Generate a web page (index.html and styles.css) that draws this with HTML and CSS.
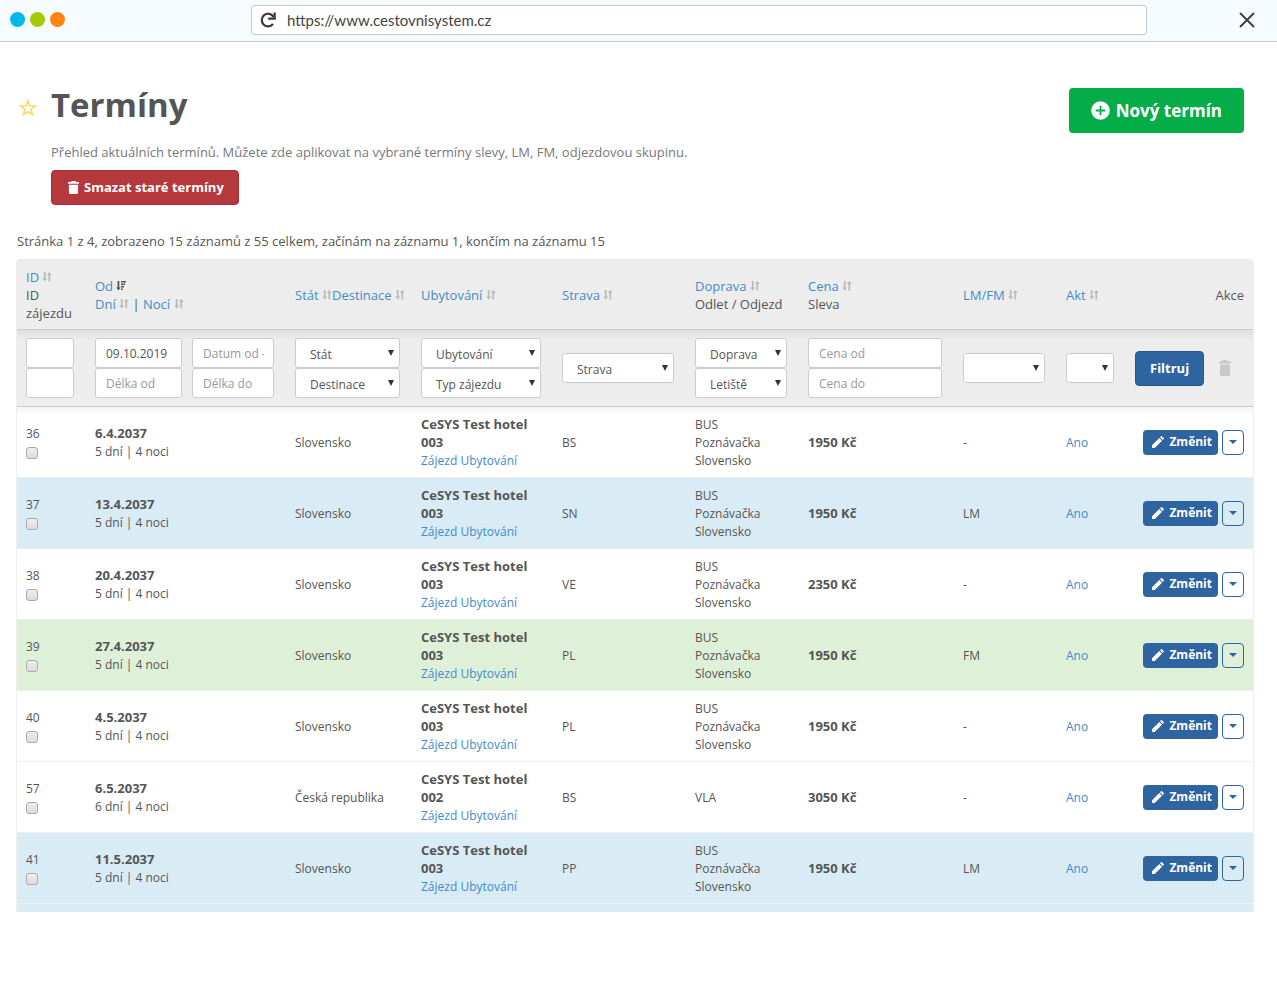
FILE: index.html
```html
<!DOCTYPE html>
<html lang="cs">
<head>
<meta charset="utf-8">
<meta name="viewport" content="width=device-width, initial-scale=1">
<title>Termíny</title>
<link rel="stylesheet" href="styles.css">
</head>
<body>
<svg class="sprite" aria-hidden="true">
  <symbol id="sort" viewBox="0 0 10 10"><path d="M1.800 0h1.800v6.500H5.200L2.700 9.500.2 6.500h1.600zM6.400 9.500h1.800V3h1.600L7.300 0 4.800 3h1.600z"/></symbol>
  <symbol id="sorted" viewBox="0 0 10 10"><path d="M1.500 0h1.800v6.500H4.600L2.400 9.500.2 6.500h1.300zM5 0h5v1.600H5zM5 2.500h4v1.500H5zM5 5h3v1.500H5zM5 7.500h1.800V9H5z"/></symbol>
  <symbol id="trash" viewBox="0 0 12 14"><path d="M4 0h4l.8 1H12v2H0V1h3.200zM1 4h10v8.500q0 1.500-1.500 1.500h-7Q1 14 1 12.500z"/></symbol>
  <symbol id="pencil" viewBox="0 0 12 12"><path d="M0 12v-2.700L7.300 2 10 4.700 2.700 12zM8 1.300 9 .3q.5-.5 1 0L11.700 2q.5.500 0 1l-1 1z"/></symbol>
  <symbol id="caret" viewBox="0 0 8 4"><path d="M0 0h8L4 4z"/></symbol>
</svg>

<div class="browser">
  <div class="dots"><span class="dot dot-blue"></span><span class="dot dot-green"></span><span class="dot dot-orange"></span></div>
  <div class="address">
    <button class="plain" type="button" aria-label="Obnovit"><svg width="16" height="16" viewBox="0 0 16 16"><path d="M13 12A6.300 6.300 0 1 1 13.600 5" fill="none" stroke="#3a3a3a" stroke-width="2.200"/><path d="M14.700.6V6.600H8.200" fill="none" stroke="#3a3a3a" stroke-width="2.200"/></svg></button>
    <input class="url" type="text" aria-label="Adresa" value="https://www.cestovnisystem.cz">
  </div>
  <button class="plain close" type="button" aria-label="Zavřít"><svg width="16" height="16" viewBox="0 0 16 16"><path d="M1.500 1.500l13 13M14.500 1.500l-13 13" stroke="#3a3a3a" stroke-width="1.800" stroke-linecap="round"/></svg></button>
</div>

<main class="page">
  <header class="head">
    <button class="plain star" type="button" aria-label="Oblíbené"><svg width="18" height="18" viewBox="0 0 18 18"><path d="M9 1.600l1.900 5.200 5.500.2-4.300 3.400 1.500 5.300L9 12.700l-4.600 3 1.500-5.300L1.600 7l5.500-.2z" fill="none" stroke="#fbd85e" stroke-width="1.500"/></svg></button>
    <div class="intro">
      <h1>Termíny</h1>
      <p class="lead">Přehled aktuálních termínů. Můžete zde aplikovat na vybrané termíny slevy, LM, FM, odjezdovou skupinu.</p>
      <button class="btn btn-danger" type="button"><svg width="11" height="13"><use href="#trash"/></svg>Smazat staré termíny</button>
    </div>
    <button class="btn btn-new" type="button"><svg width="19" height="19" viewBox="0 0 19 19"><circle cx="9.500" cy="9.500" r="9.300" fill="#fff"/><path d="M9.500 4.700v9.600M4.700 9.500h9.600" stroke="#05ad48" stroke-width="1.800"/></svg>Nový termín</button>
  </header>

  <p class="summary">Stránka 1 z 4, zobrazeno 15 záznamů z 55 celkem, začínám na záznamu 1, končím na záznamu 15</p>

  <table class="grid">
    <colgroup><col class="c-id"><col class="c-date"><col class="c-state"><col class="c-hotel"><col class="c-board"><col class="c-transport"><col class="c-price"><col class="c-lm"><col class="c-act"><col class="c-tools"></colgroup>
    <thead>
      <tr class="titles">
        <th><a href="#">ID</a> <svg class="sort"><use href="#sort"/></svg><br>ID zájezdu</th>
        <th><a href="#">Od</a> <svg class="sort on"><use href="#sorted"/></svg><br><a href="#">Dní</a> <svg class="sort"><use href="#sort"/></svg> | <a href="#">Nocí</a> <svg class="sort"><use href="#sort"/></svg></th>
        <th class="tight"><a href="#">Stát</a> <svg class="sort"><use href="#sort"/></svg><a href="#">Destinace</a> <svg class="sort"><use href="#sort"/></svg></th>
        <th><a href="#">Ubytování</a> <svg class="sort"><use href="#sort"/></svg></th>
        <th><a href="#">Strava</a> <svg class="sort"><use href="#sort"/></svg></th>
        <th class="tight"><a href="#">Doprava</a> <svg class="sort"><use href="#sort"/></svg><br>Odlet / Odjezd</th>
        <th><a href="#">Cena</a> <svg class="sort"><use href="#sort"/></svg><br>Sleva</th>
        <th><a href="#">LM/FM</a> <svg class="sort"><use href="#sort"/></svg></th>
        <th><a href="#">Akt</a> <svg class="sort"><use href="#sort"/></svg></th>
        <th class="right">Akce</th>
      </tr>
      <tr class="filters">
        <td><div class="stack"><input class="field" type="text" aria-label="ID"><input class="field" type="text" aria-label="ID zájezdu"></div></td>
        <td><div class="pairs"><input class="field" type="text" aria-label="Datum od" value="09.10.2019"><input class="field" type="text" aria-label="Datum od - do" placeholder="Datum od - do"><input class="field" type="text" aria-label="Délka od" placeholder="Délka od"><input class="field" type="text" aria-label="Délka do" placeholder="Délka do"></div></td>
        <td><div class="stack"><span class="pick"><select class="field" aria-label="Stát"><option>Stát</option></select></span><span class="pick"><select class="field" aria-label="Destinace"><option>Destinace</option></select></span></div></td>
        <td><div class="stack"><span class="pick"><select class="field" aria-label="Ubytování"><option>Ubytování</option></select></span><span class="pick"><select class="field" aria-label="Typ zájezdu"><option>Typ zájezdu</option></select></span></div></td>
        <td><div class="stack"><span class="pick"><select class="field" aria-label="Strava"><option>Strava</option></select></span></div></td>
        <td><div class="stack"><span class="pick"><select class="field" aria-label="Doprava"><option>Doprava</option></select></span><span class="pick"><select class="field" aria-label="Letiště"><option>Letiště</option></select></span></div></td>
        <td><div class="stack"><input class="field" type="text" aria-label="Cena od" placeholder="Cena od"><input class="field" type="text" aria-label="Cena do" placeholder="Cena do"></div></td>
        <td><div class="stack"><span class="pick"><select class="field" aria-label="LM/FM"><option></option></select></span></div></td>
        <td><div class="stack"><span class="pick"><select class="field" aria-label="Akt"><option></option></select></span></div></td>
        <td><div class="apply"><button class="btn btn-filter" type="button">Filtruj</button><button class="plain clear" type="button" aria-label="Zrušit filtr"><svg width="12" height="16" viewBox="0 0 12 14" preserveAspectRatio="none"><use href="#trash"/></svg></button></div></td>
      </tr>
    </thead>
    <tbody>
      <tr>
        <td><label class="pickrow">36<input type="checkbox"></label></td>
        <td><strong>6.4.2037</strong><br>5 dní | 4 noci</td>
        <td>Slovensko</td>
        <td><strong>CeSYS Test hotel 003</strong><br><a href="#">Zájezd</a> <a href="#">Ubytování</a></td>
        <td>BS</td>
        <td>BUS<br>Poznávačka<br>Slovensko</td>
        <td><strong>1950 Kč</strong></td>
        <td>-</td>
        <td><a href="#">Ano</a></td>
        <td><div class="tools"><button class="btn btn-edit" type="button"><svg width="12" height="12"><use href="#pencil"/></svg>Změnit</button><button class="more" type="button" aria-label="Další akce"><svg width="8" height="4"><use href="#caret"/></svg></button></div></td>
      </tr>
      <tr class="lm">
        <td><label class="pickrow">37<input type="checkbox"></label></td>
        <td><strong>13.4.2037</strong><br>5 dní | 4 noci</td>
        <td>Slovensko</td>
        <td><strong>CeSYS Test hotel 003</strong><br><a href="#">Zájezd</a> <a href="#">Ubytování</a></td>
        <td>SN</td>
        <td>BUS<br>Poznávačka<br>Slovensko</td>
        <td><strong>1950 Kč</strong></td>
        <td>LM</td>
        <td><a href="#">Ano</a></td>
        <td><div class="tools"><button class="btn btn-edit" type="button"><svg width="12" height="12"><use href="#pencil"/></svg>Změnit</button><button class="more" type="button" aria-label="Další akce"><svg width="8" height="4"><use href="#caret"/></svg></button></div></td>
      </tr>
      <tr>
        <td><label class="pickrow">38<input type="checkbox"></label></td>
        <td><strong>20.4.2037</strong><br>5 dní | 4 noci</td>
        <td>Slovensko</td>
        <td><strong>CeSYS Test hotel 003</strong><br><a href="#">Zájezd</a> <a href="#">Ubytování</a></td>
        <td>VE</td>
        <td>BUS<br>Poznávačka<br>Slovensko</td>
        <td><strong>2350 Kč</strong></td>
        <td>-</td>
        <td><a href="#">Ano</a></td>
        <td><div class="tools"><button class="btn btn-edit" type="button"><svg width="12" height="12"><use href="#pencil"/></svg>Změnit</button><button class="more" type="button" aria-label="Další akce"><svg width="8" height="4"><use href="#caret"/></svg></button></div></td>
      </tr>
      <tr class="fm">
        <td><label class="pickrow">39<input type="checkbox"></label></td>
        <td><strong>27.4.2037</strong><br>5 dní | 4 noci</td>
        <td>Slovensko</td>
        <td><strong>CeSYS Test hotel 003</strong><br><a href="#">Zájezd</a> <a href="#">Ubytování</a></td>
        <td>PL</td>
        <td>BUS<br>Poznávačka<br>Slovensko</td>
        <td><strong>1950 Kč</strong></td>
        <td>FM</td>
        <td><a href="#">Ano</a></td>
        <td><div class="tools"><button class="btn btn-edit" type="button"><svg width="12" height="12"><use href="#pencil"/></svg>Změnit</button><button class="more" type="button" aria-label="Další akce"><svg width="8" height="4"><use href="#caret"/></svg></button></div></td>
      </tr>
      <tr>
        <td><label class="pickrow">40<input type="checkbox"></label></td>
        <td><strong>4.5.2037</strong><br>5 dní | 4 noci</td>
        <td>Slovensko</td>
        <td><strong>CeSYS Test hotel 003</strong><br><a href="#">Zájezd</a> <a href="#">Ubytování</a></td>
        <td>PL</td>
        <td>BUS<br>Poznávačka<br>Slovensko</td>
        <td><strong>1950 Kč</strong></td>
        <td>-</td>
        <td><a href="#">Ano</a></td>
        <td><div class="tools"><button class="btn btn-edit" type="button"><svg width="12" height="12"><use href="#pencil"/></svg>Změnit</button><button class="more" type="button" aria-label="Další akce"><svg width="8" height="4"><use href="#caret"/></svg></button></div></td>
      </tr>
      <tr>
        <td><label class="pickrow">57<input type="checkbox"></label></td>
        <td><strong>6.5.2037</strong><br>6 dní | 4 noci</td>
        <td>Česká republika</td>
        <td><strong>CeSYS Test hotel 002</strong><br><a href="#">Zájezd</a> <a href="#">Ubytování</a></td>
        <td>BS</td>
        <td>VLA</td>
        <td><strong>3050 Kč</strong></td>
        <td>-</td>
        <td><a href="#">Ano</a></td>
        <td><div class="tools"><button class="btn btn-edit" type="button"><svg width="12" height="12"><use href="#pencil"/></svg>Změnit</button><button class="more" type="button" aria-label="Další akce"><svg width="8" height="4"><use href="#caret"/></svg></button></div></td>
      </tr>
      <tr class="lm">
        <td><label class="pickrow">41<input type="checkbox"></label></td>
        <td><strong>11.5.2037</strong><br>5 dní | 4 noci</td>
        <td>Slovensko</td>
        <td><strong>CeSYS Test hotel 003</strong><br><a href="#">Zájezd</a> <a href="#">Ubytování</a></td>
        <td>PP</td>
        <td>BUS<br>Poznávačka<br>Slovensko</td>
        <td><strong>1950 Kč</strong></td>
        <td>LM</td>
        <td><a href="#">Ano</a></td>
        <td><div class="tools"><button class="btn btn-edit" type="button"><svg width="12" height="12"><use href="#pencil"/></svg>Změnit</button><button class="more" type="button" aria-label="Další akce"><svg width="8" height="4"><use href="#caret"/></svg></button></div></td>
      </tr>
      <tr class="lm rest"><td colspan="10"></td></tr>
    </tbody>
  </table>
</main>
</body>
</html>
```
FILE: styles.css
```css
* { box-sizing: border-box; }
body {
  margin: 0;
  background: #fff;
  color: #555;
  font: 13px/18px "Open Sans", "Noto Sans", sans-serif;
}
a { color: #428bca; text-decoration: none; }
button, input, select { font: inherit; color: inherit; }
button { cursor: pointer; }
svg { display: block; fill: currentColor; }
.sprite { display: none; }
.plain { display: block; padding: 0; border: 0; background: none; }

.browser {
  display: flex;
  align-items: center;
  height: 42px;
  padding: 0 22px 2px 10px;
  background: #f5fbff;
  border-bottom: 1px solid #c8c9cb;
}
.dots { display: flex; gap: 5px; width: 241px; }
.dot { width: 15px; height: 15px; border-radius: 50%; }
.dot-blue { background: #00b7ee; }
.dot-green { background: #a5ca00; }
.dot-orange { background: #ff8412; }
.address {
  display: flex;
  flex: 1;
  align-items: center;
  gap: 11px;
  height: 30px;
  margin-right: 92px;
  padding: 0 8px;
  background: #fff;
  border: 1px solid #c8c9cb;
  border-radius: 3px;
}
.url { flex: 1; padding: 0; border: 0; outline: 0; background: none; color: #444; font-family: Lato, "Open Sans", sans-serif; font-size: 15px; }

.page { padding: 46px 24px 24px 17px; }
.head { display: flex; align-items: flex-start; margin-right: 9px; }
.star { width: 34px; padding: 11px 0 0 2px; }
.intro { flex: 1; }
h1 { margin: 0; font-size: 33px; line-height: 34px; font-weight: 700; }
.lead { margin: 21px 0 9px; color: #777; }
.btn {
  display: flex;
  align-items: center;
  border: 0;
  border-radius: 4px;
  color: #fff;
  font-weight: 700;
}
.btn-danger { gap: 5px; height: 35px; padding: 0 14px 1px 16px; background: #b5383d; border: 1px solid #ac2d34; }
.btn-new { gap: 6px; height: 45px; padding: 0 22px; background: #05ad48; font-size: 17px; }
.summary { margin: 27px 0 9px; }

.grid {
  width: 100%;
  table-layout: fixed;
  border-collapse: separate;
  border-spacing: 0;
  border-radius: 4px 4px 0 0;
  overflow: hidden;
  box-shadow: 0 0 0 1px #eee;
  clip-path: inset(0 -1px 0 -1px);
}
.c-id { width: 69px; }
.c-date { width: 200px; }
.c-state { width: 126px; }
.c-hotel { width: 141px; }
.c-board { width: 133px; }
.c-transport { width: 113px; }
.c-price { width: 155px; }
.c-lm { width: 103px; }
.c-act { width: 69px; }
.c-tools { width: 127px; }
th, td { padding: 9px 12px 7px 9px; text-align: left; vertical-align: middle; font-weight: 400; }
.titles th { background: #ededed; border-bottom: 1px solid #ccc; }
.titles .right { padding-right: 9px; text-align: right; }
.titles .tight { padding-right: 0; white-space: nowrap; }
.sort { display: inline-block; width: 10px; height: 10px; color: #bbb; }
.sort.on { color: #555; }
.filters td { padding-top: 8px; padding-bottom: 8px; background: linear-gradient(#dfdfdf, #ededed 10px); border-bottom: 1px solid #ccc; }
.stack { display: grid; }
.pairs { display: grid; grid-template-columns: 87px 82px; column-gap: 10px; }
.field {
  width: 100%;
  min-width: 0;
  height: 30px;
  padding: 1px 9px 0 10px;
  background: #fff;
  border: 1px solid #ccc;
  border-radius: 3px;
  font-size: 12px;
}
.field::placeholder { color: #999; opacity: 1; }
.pick { position: relative; display: block; }
.pick .field { display: block; appearance: none; padding: 3px 14px 0 14px; }
.pick::after {
  content: "";
  position: absolute;
  top: 12px;
  right: 6px;
  border: 3px solid transparent;
  border-top: 6px solid #333;
  border-bottom: 0;
  pointer-events: none;
}
.apply { display: flex; align-items: center; gap: 15px; }
.btn-filter { height: 35px; padding: 0 14px; background: #2e65a1; border: 1px solid #25588f; }
.clear { color: #c8c8c8; }

tbody td { border-bottom: 1px solid #eee; font-size: 12px; }
tbody strong { font-size: 13px; line-height: 16px; }
tbody tr:first-child td { background: linear-gradient(#f3f3f3, #fff 8px); }
.lm td { background: #d9ecf6; }
.fm td { background: #dff0d8; }
.pickrow { display: block; }
.pickrow input {
  display: block;
  appearance: none;
  width: 12px;
  height: 12px;
  margin: 4px 0 2px;
  border: 1px solid #aaa;
  border-radius: 3px;
  background: linear-gradient(#eee, #dcdcdc);
}
.tools { display: flex; justify-content: flex-end; gap: 4px; margin: 0 -3px 2px 0; }
.btn-edit { gap: 5px; height: 25px; padding: 0 6px 0 9px; background: #2e65a1; font-size: 12px; }
.more {
  display: grid;
  place-items: center;
  width: 22px;
  height: 25px;
  padding: 0;
  background: transparent;
  border: 1px solid #2e65a1;
  border-radius: 4px;
  color: #2e65a1;
}
.rest td { height: 8px; padding: 0; border: 0; }
```
